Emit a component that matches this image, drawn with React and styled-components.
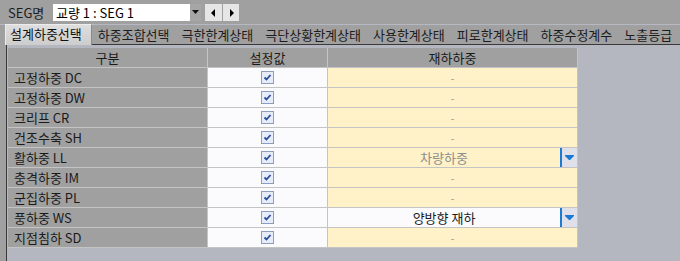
import React from 'react';
import styled, { createGlobalStyle } from 'styled-components';

const GlobalStyle = createGlobalStyle`
  html, body {
    margin: 0;
    padding: 0;
    background: #a0a0a0;
  }
  body {
    font-family: "Noto Sans CJK KR", "Noto Sans", sans-serif;
    font-size: 13px;
    color: #1c1c1c;
  }
`;

const Page = styled.div`
  width: 680px;
  height: 261px;
  overflow: hidden;
  display: flex;
  flex-direction: column;
  background: #a0a0a0;
`;

const Toolbar = styled.div`
  height: 24px;
  display: flex;
  align-items: flex-start;
  padding: 4px 0 0 8px;
  box-sizing: border-box;
`;

const Label = styled.span`
  width: 45px;
  line-height: 17px;
`;

const Combo = styled.div`
  width: 148px;
  height: 17px;
  display: flex;
  background: #fff;
`;

const ComboText = styled.span`
  flex: 1;
  padding-left: 3px;
  line-height: 17px;
  color: #000;
`;

const ComboButton = styled.div`
  width: 11px;
  background: #a6a6a6;
  display: flex;
  align-items: center;
  justify-content: center;
`;

const NavButton = styled.div`
  width: ${p => p.$w}px;
  height: 17px;
  margin-left: ${p => p.$gap}px;
  background: #e6e6e6;
  display: flex;
  align-items: center;
  justify-content: center;
`;

const TabRow = styled.div`
  height: 20px;
  box-sizing: border-box;
  border-top: 1px solid #b6b9c4;
  display: flex;
  align-items: flex-start;
`;

const Tab = styled.div`
  padding: 0 6px;
  line-height: 19px;
  white-space: nowrap;
  color: #1c1c1c;
`;

const ActiveTab = styled.div`
  position: relative;
  z-index: 1;
  margin: -1px 0 -1px 5px;
  height: 21px;
  box-sizing: border-box;
  padding: 1px 9px 0 4px;
  line-height: 16px;
  white-space: nowrap;
  background: linear-gradient(#dedede, #cdcdcd);
  border-top: 1px solid #ececec;
  border-left: 1px solid #ececec;
  border-right: 1px solid #8a8a8a;
  color: #111;
`;

const Panel = styled.div`
  flex: 1;
  margin-left: 6px;
  border-top: 1px solid #3a3a3a;
  border-left: 1px solid #3a3a3a;
  background: #b4b7c0;
  padding: 3px 0 0 1px;
`;

const Grid = styled.div`
  display: grid;
  grid-template-columns: 200px 120px 250px;
  width: 570px;
`;

const Cell = styled.div`
  height: 20px;
  box-sizing: border-box;
  border-right: 1px solid #c4c4c4;
  border-bottom: 1px solid #c4c4c4;
  display: flex;
  align-items: center;
  line-height: 19px;
`;

const HeadCell = styled(Cell)`
  background: #a0a0a0;
  justify-content: center;
  color: #1a1a1a;
`;

const NameCell = styled(Cell)`
  background: #a0a0a0;
  padding-left: 6px;
  color: #1a1a1a;
`;

const CheckCell = styled(Cell)`
  background: #fbfbfe;
  justify-content: center;
`;

const LoadCell = styled(Cell)`
  background: ${p => (p.$white ? '#fbfbfe' : '#fff2c8')};
`;

const LoadValue = styled.span`
  flex: 1;
  text-align: center;
  color: ${p => (p.$muted ? '#8e8e8e' : '#1a1a1a')};
  font-size: ${p => (p.$dash ? '10px' : '13px')};
`;

const DropButton = styled.div`
  width: 17px;
  height: 19px;
  box-sizing: border-box;
  border-left: 2px solid #1a7ad4;
  background: #e0e0ea;
  display: flex;
  align-items: center;
  justify-content: center;
`;

const CheckBox = () => (
  <svg width="13" height="13" viewBox="0 0 13 13">
    <rect x="0.5" y="0.5" width="12" height="12" fill="#e6edf8" stroke="#8d9cbc" />
    <polyline points="3.5,6.5 5.5,8.5 9.5,4" fill="none" stroke="#2a4a9c" strokeWidth="1.8" />
  </svg>
);

const DownArrow = ({ color = '#1a7ad4' }) => (
  <svg width="9" height="5" viewBox="0 0 9 5">
    <path d="M0 0H9V1L5 5H4L0 1Z" fill={color} />
  </svg>
);

const rows = [
  { name: '고정하중 DC', value: '-' },
  { name: '고정하중 DW', value: '-' },
  { name: '크리프 CR', value: '-' },
  { name: '건조수축 SH', value: '-' },
  { name: '활하중 LL', value: '차량하중', drop: true, muted: true },
  { name: '충격하중 IM', value: '-' },
  { name: '군집하중 PL', value: '-' },
  { name: '풍하중 WS', value: '양방향 재하', drop: true, white: true },
  { name: '지점침하 SD', value: '-' }
];

const tabs = ['하중조합선택', '극한한계상태', '극단상황한계상태', '사용한계상태', '피로한계상태', '하중수정계수', '노출등급'];

export default function App() {
  return (
    <Page>
      <GlobalStyle />
      <Toolbar>
        <Label>SEG명</Label>
        <Combo>
          <ComboText>교량 1 : SEG 1</ComboText>
          <ComboButton>
            <svg width="7" height="5" viewBox="0 0 7 5">
              <path d="M0 0H7L3.5 4Z" fill="#111" />
            </svg>
          </ComboButton>
        </Combo>
        <NavButton $w={17} $gap={4}>
          <svg width="5" height="8" viewBox="0 0 5 8">
            <path d="M4 0V8L0 4Z" fill="#000" />
          </svg>
        </NavButton>
        <NavButton $w={16} $gap={1}>
          <svg width="5" height="8" viewBox="0 0 5 8">
            <path d="M1 0V8L5 4Z" fill="#000" />
          </svg>
        </NavButton>
      </Toolbar>
      <TabRow>
        <ActiveTab>설계하중선택</ActiveTab>
        {tabs.map(t => (
          <Tab key={t}>{t}</Tab>
        ))}
      </TabRow>
      <Panel>
        <Grid>
          <HeadCell>구분</HeadCell>
          <HeadCell>설정값</HeadCell>
          <HeadCell>재하하중</HeadCell>
          {rows.map(r => (
            <React.Fragment key={r.name}>
              <NameCell>{r.name}</NameCell>
              <CheckCell>
                <CheckBox />
              </CheckCell>
              <LoadCell $white={r.white}>
                <LoadValue $muted={r.muted || r.value === '-'} $dash={r.value === '-'}>
                  {r.value}
                </LoadValue>
                {r.drop && (
                  <DropButton>
                    <DownArrow />
                  </DropButton>
                )}
              </LoadCell>
            </React.Fragment>
          ))}
        </Grid>
      </Panel>
    </Page>
  );
}
